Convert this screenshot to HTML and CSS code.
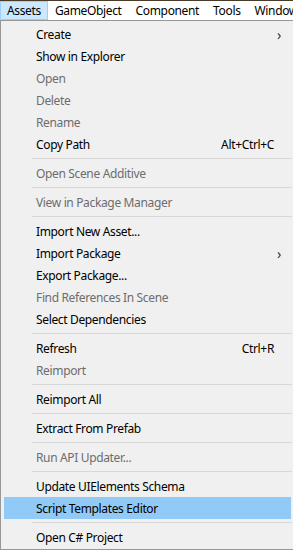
FILE: index.html
```html
<!DOCTYPE html>
<html lang="en">
<head>
  <meta charset="UTF-8" />
  <title>Assets Menu</title>
  <link rel="stylesheet" href="styles.css">
</head>
<body>
  <div class="menubar">
    <span class="top-item active">Assets</span>
    <span class="top-item">GameObject</span>
    <span class="top-item">Component</span>
    <span class="top-item">Tools</span>
    <span class="top-item">Window</span>
  </div>

  <div class="menu">
    <div class="item"><span class="label">Create</span><span class="arrow">&#8250;</span></div>
    <div class="item"><span class="label">Show in Explorer</span></div>
    <div class="item disabled"><span class="label">Open</span></div>
    <div class="item disabled"><span class="label">Delete</span></div>
    <div class="item disabled"><span class="label">Rename</span></div>
    <div class="item"><span class="label">Copy Path</span><span class="key">Alt+Ctrl+C</span></div>
    <div class="sep"></div>
    <div class="item disabled"><span class="label">Open Scene Additive</span></div>
    <div class="sep"></div>
    <div class="item disabled"><span class="label">View in Package Manager</span></div>
    <div class="sep"></div>
    <div class="item"><span class="label">Import New Asset...</span></div>
    <div class="item"><span class="label">Import Package</span><span class="arrow">&#8250;</span></div>
    <div class="item"><span class="label">Export Package...</span></div>
    <div class="item disabled"><span class="label">Find References In Scene</span></div>
    <div class="item"><span class="label">Select Dependencies</span></div>
    <div class="sep"></div>
    <div class="item"><span class="label">Refresh</span><span class="key">Ctrl+R</span></div>
    <div class="item disabled"><span class="label">Reimport</span></div>
    <div class="sep"></div>
    <div class="item"><span class="label">Reimport All</span></div>
    <div class="sep"></div>
    <div class="item"><span class="label">Extract From Prefab</span></div>
    <div class="sep"></div>
    <div class="item disabled"><span class="label">Run API Updater...</span></div>
    <div class="sep"></div>
    <div class="item"><span class="label">Update UIElements Schema</span></div>
    <div class="item hover"><span class="label">Script Templates Editor</span></div>
    <div class="sep"></div>
    <div class="item"><span class="label">Open C# Project</span></div>
  </div>
</body>
</html>
```

FILE: styles.css
```css
body {
  margin: 0;
  padding: 0;
  font-family: 'Noto Sans', 'Open Sans', sans-serif;
  font-size: 12px;
  letter-spacing: -0.35px;
  color: #000;
  background: #f0f0f0;
  width: 293px;
  height: 550px;
  overflow: hidden;
}
.menubar {
  display: flex;
  height: 19px;
  background: #fff;
  border-top: 1px solid #4a3a28;
  white-space: nowrap;
  overflow: hidden;
}
.top-item {
  padding: 0 6px;
  line-height: 17px;
  border: 1px solid transparent;
}
.top-item.active {
  background: #cce8ff;
  border-color: #99d1ff;
}
.menu {
  width: 294px;
  border: 1px solid #979797;
  border-right-color: #d9d9d9;
  padding: 2px 0 2px 2px;
  box-sizing: border-box;
  background: #f0f0f0;
  height: 530px;
}
.item {
  display: flex;
  align-items: center;
  height: 22px;
  margin-left: 1px;
  margin-right: 2px;
  padding-left: 32px;
  padding-right: 11px;
}
.item .label {
  flex: 1;
}
.item.disabled {
  color: #6d6d6d;
}
.item.hover {
  background: #91c9f7;
}
.key {
  margin-right: 6px;
}
.arrow {
  font-size: 14px;
  color: #333;
  margin-right: -1px;
}
.sep {
  height: 1px;
  background: #d7d7d7;
  margin: 3px 1px 3px 29px;
}
```
